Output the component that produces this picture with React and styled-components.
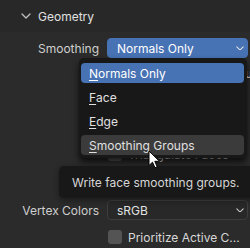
import React from "react";
import styled, { createGlobalStyle } from "styled-components";

const Global = createGlobalStyle`
  html, body {
    margin: 0;
    padding: 0;
    background: #2b2b2b;
    overflow: hidden;
  }
  #root {
    width: 250px;
    height: 248px;
  }
  * { box-sizing: border-box; }
`;

const Page = styled.div`
  position: relative;
  width: 250px;
  height: 248px;
  overflow: hidden;
  background: #2b2b2b;
  font-family: Inter, "Noto Sans", sans-serif;
  font-size: 12px;
  color: #d0d0d0;
`;

const Header = styled.div`
  height: 32px;
  display: flex;
  align-items: center;
  gap: 7px;
  padding-left: 21px;
  background: #282828;
  color: #e0e0e0;
`;

const Body = styled.div`
  display: flex;
  flex-direction: column;
  gap: 7px;
  padding: 6px 2px 0 0;
`;

const Row = styled.div`
  display: grid;
  grid-template-columns: 99px 1fr;
  column-gap: 8px;
  height: 20px;
  align-items: center;
  margin-top: ${(p) => p.$shift || 0}px;
`;

const Label = styled.div`
  text-align: right;
  color: #cfcfcf;
  white-space: nowrap;
`;

const Dropdown = styled.div`
  height: 20px;
  border-radius: 4px;
  display: flex;
  align-items: center;
  justify-content: space-between;
  padding: 0 3px 0 9px;
  background: ${(p) => (p.$active ? "#4772b3" : "#282828")};
  border: 1px solid ${(p) => (p.$active ? "#4772b3" : "#3d3d3d")};
  color: ${(p) => (p.$active ? "#ffffff" : "#e2e2e2")};
`;

const CheckCell = styled.div`
  grid-column: 2;
  display: flex;
  align-items: center;
  gap: 6px;
  white-space: nowrap;
  color: #d8d8d8;
`;

const Box = styled.div`
  width: 14px;
  height: 14px;
  border-radius: 3px;
  background: #545454;
  flex: none;
  margin-left: 1px;
`;

const Menu = styled.div`
  position: absolute;
  left: 79px;
  top: 58px;
  width: 168px;
  padding: 5px 3px 3px 2px;
  background: #181818;
  border-radius: 5px;
  box-shadow: 0 4px 6px rgba(0, 0, 0, 0.7);
  display: flex;
  flex-direction: column;
  gap: 4px;
`;

const Item = styled.div`
  height: 20px;
  border-radius: 4px;
  display: flex;
  align-items: center;
  padding-left: 8px;
  color: ${(p) => (p.$state === "active" ? "#ffffff" : "#e0e0e0")};
  background: ${(p) =>
    p.$state === "active" ? "#4772b3" : p.$state === "hover" ? "#3b3b3b" : "transparent"};
`;

const Key = styled.span`
  text-decoration: underline;
  text-underline-offset: 2px;
  text-decoration-thickness: 1px;
`;

const Tooltip = styled.div`
  position: absolute;
  left: 59px;
  top: 166px;
  width: 210px;
  height: 32px;
  padding-left: 13px;
  display: flex;
  align-items: center;
  background: #181818;
  border-radius: 5px;
  box-shadow: 0 2px 6px rgba(0, 0, 0, 0.4);
  color: #d6d6d6;
  white-space: nowrap;
`;

const Cursor = styled.svg`
  position: absolute;
  left: 148px;
  top: 150px;
`;

const Chevron = ({ size = 10, color = "#bdbdbd" }) => (
  <svg width={size} height={size * 0.6} viewBox="0 0 10 6" fill="none">
    <path d="M1 1 L5 5 L9 1" stroke={color} strokeWidth="1.3" strokeLinecap="round" strokeLinejoin="round" />
  </svg>
);

const CheckRow = ({ label, shift }) => (
  <Row $shift={shift}>
    <CheckCell>
      <Box />
      {label}
    </CheckCell>
  </Row>
);

const items = [
  { k: "N", rest: "ormals Only", state: "active" },
  { k: "F", rest: "ace" },
  { k: "E", rest: "dge" },
  { k: "S", rest: "moothing Groups", state: "hover" },
];

export default function App() {
  return (
    <>
      <Global />
      <Page>
        <Header>
          <Chevron size={10} color="#c0c0c0" />
          Geometry
        </Header>
        <Body>
          <Row>
            <Label>Smoothing</Label>
            <Dropdown $active>
              Normals Only
              <Chevron size={8} color="#e6e6e6" />
            </Dropdown>
          </Row>
          <CheckRow label="Export Subdivision Surface" shift={-2} />
          <CheckRow label="Apply Modifiers" />
          <CheckRow label="Loose Edges" />
          <CheckRow label="Triangulate Faces" />
          <CheckRow label="Tangent Space" shift={2} />
          <Row>
            <Label>Vertex Colors</Label>
            <Dropdown>
              sRGB
              <Chevron size={8} color="#d0d0d0" />
            </Dropdown>
          </Row>
          <CheckRow label="Prioritize Active C..." />
        </Body>
        <Menu>
          {items.map((it) => (
            <Item key={it.k} $state={it.state}>
              <Key>{it.k}</Key>
              {it.rest}
            </Item>
          ))}
        </Menu>
        <Tooltip>Write face smoothing groups.</Tooltip>
        <Cursor width="14" height="20" viewBox="0 0 14 20">
          <path
            d="M1 1 L1 15.5 L4.5 12.2 L7 17.8 L9.2 16.8 L6.8 11.3 L11.5 11.3 Z"
            fill="#ffffff"
            stroke="#000000"
            strokeWidth="1"
            strokeLinejoin="round"
          />
        </Cursor>
      </Page>
    </>
  );
}
